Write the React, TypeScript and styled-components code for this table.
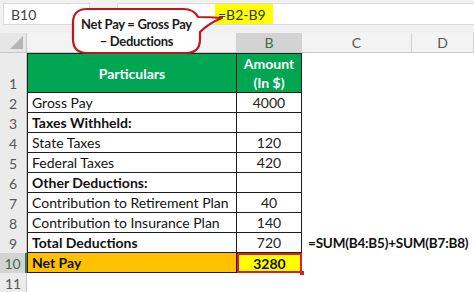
import styled, { createGlobalStyle } from 'styled-components';

const GlobalStyle = createGlobalStyle`
  * { box-sizing: border-box; }
  body {
    margin: 0;
    background: #ffffff;
    font-family: Lato, "Open Sans", Arial, sans-serif;
  }
`;

type Row = {
  label: string;
  value?: string;
  bold?: boolean;
  note?: string;
};

// 2~9행 데이터
const ROWS: Row[] = [
  { label: 'Gross Pay', value: '4000' },
  { label: 'Taxes Withheld:', bold: true },
  { label: 'State Taxes', value: '120' },
  { label: 'Federal Taxes', value: '420' },
  { label: 'Other Deductions:', bold: true },
  { label: 'Contribution to Retirement Plan', value: '40' },
  { label: 'Contribution to Insurance Plan', value: '140' },
  { label: 'Total Deductions', value: '720', bold: true, note: '=SUM(B4:B5)+SUM(B7:B8)' },
];

const COLUMNS = ['A', 'B', 'C', 'D'];

const App = () => {
  return (
    <>
      <GlobalStyle />
      <St.Page>
        <St.FormulaBar>
          <St.NameBox>B10</St.NameBox>
          <St.FormulaField>
            <St.FormulaText>=B2-B9</St.FormulaText>
          </St.FormulaField>
        </St.FormulaBar>

        <St.Sheet>
          <St.Corner>
            <St.CornerMark />
          </St.Corner>
          {COLUMNS.map((col) => (
            <St.ColHeader key={col} $selected={col === 'B'}>
              {col === 'A' ? '' : col}
            </St.ColHeader>
          ))}

          {/* 1행: 표 머리 */}
          <St.RowHeader>1</St.RowHeader>
          <St.HeadCell $first>Particulars</St.HeadCell>
          <St.HeadCell>
            <span>Amount</span>
            <span>(In $)</span>
          </St.HeadCell>
          <St.Blank />
          <St.Blank />

          {ROWS.map((row, i) => (
            <St.RowGroup key={row.label}>
              <St.RowHeader>{i + 2}</St.RowHeader>
              <St.LabelCell $bold={row.bold}>{row.label}</St.LabelCell>
              <St.ValueCell>{row.value}</St.ValueCell>
              <St.Blank>{row.note && <St.Note>{row.note}</St.Note>}</St.Blank>
              <St.Blank />
            </St.RowGroup>
          ))}

          <St.RowHeader $selected>10</St.RowHeader>
          <St.LabelCell $bold $bg="#ffc000">
            Net Pay
          </St.LabelCell>
          <St.ResultCell>3280</St.ResultCell>
          <St.Blank />
          <St.Blank />

          <St.RowHeader>11</St.RowHeader>
          <St.Blank />
          <St.Blank />
          <St.Blank />
          <St.Blank />
        </St.Sheet>

        <St.Callout>
          <svg width="156" height="50" viewBox="0 0 156 50">
            <path
              d="M16 2 H112 Q123 2 127 10 Q138 10 151 11 Q138 16 129 25 V32 Q129 46 115 46 H16 Q2 46 2 32 V16 Q2 2 16 2 Z"
              fill="#ffffff"
              stroke="#c3161c"
              strokeWidth="2.2"
              strokeLinejoin="round"
            />
          </svg>
          <St.CalloutText>
            <span>Net Pay = Gross Pay</span>
            <span>– Deductions</span>
          </St.CalloutText>
        </St.Callout>
      </St.Page>
    </>
  );
};

export default App;

const St = {
  Page: styled.div`
    position: relative;
    width: 474px;
    height: 292px;
    overflow: hidden;
    background: #ffffff;
  `,

  FormulaBar: styled.div`
    display: flex;
    align-items: flex-start;
    gap: 27px;
    height: 33px;
    padding: 3px 0 0 3px;
    background: #f1f1f1;
  `,

  NameBox: styled.div`
    display: flex;
    align-items: center;
    width: 87px;
    height: 22px;
    padding-left: 7px;
    background: #ffffff;
    border: 1px solid #dadada;
    color: #444444;
    font-size: 14px;
  `,

  FormulaField: styled.div`
    display: flex;
    align-items: stretch;
    flex: 1;
    height: 22px;
    padding-left: 97px;
    background: #ffffff;
    border: 1px solid #dadada;
    border-right: none;
  `,

  FormulaText: styled.div`
    display: flex;
    align-items: center;
    width: 58px;
    padding-left: 3px;
    background: #ffff00;
    color: #333333;
    font-size: 14px;
  `,

  Sheet: styled.div`
    display: grid;
    grid-template-columns: 27px 210px 65px 110px 62px;
    grid-template-rows: 20px 40px repeat(10, 20px);
  `,

  RowGroup: styled.div`
    display: contents;
  `,

  Corner: styled.div`
    position: relative;
    background: #e6e6e6;
    border-right: 1px solid #c8c8c8;
    border-bottom: 1px solid #c8c8c8;
  `,

  CornerMark: styled.div`
    position: absolute;
    right: 3px;
    bottom: 3px;
    width: 0;
    height: 0;
    border-left: 13px solid transparent;
    border-bottom: 13px solid #b5b5b5;
  `,

  ColHeader: styled.div<{ $selected?: boolean }>`
    display: flex;
    align-items: center;
    justify-content: center;
    background: ${({ $selected }) => ($selected ? '#d3d3d3' : '#f3f3f3')};
    border-right: 1px solid #d0d0d0;
    border-bottom: 1px solid #c8c8c8;
    color: ${({ $selected }) => ($selected ? '#3b6b4c' : '#555555')};
    font-size: 14px;
  `,

  RowHeader: styled.div<{ $selected?: boolean }>`
    display: flex;
    align-items: flex-end;
    justify-content: center;
    padding-bottom: 1px;
    background: ${({ $selected }) => ($selected ? '#d3d3d3' : '#ebebeb')};
    border-right: ${({ $selected }) => ($selected ? '2px solid #3c7a4f' : '1px solid #c8c8c8')};
    color: ${({ $selected }) => ($selected ? '#3b6b4c' : '#555555')};
    font-size: 14px;
  `,

  HeadCell: styled.div<{ $first?: boolean }>`
    display: flex;
    flex-direction: column;
    align-items: center;
    justify-content: center;
    gap: 2px;
    background: #00a651;
    border-top: 1px solid #1e1e1e;
    border-left: ${({ $first }) => ($first ? '1px solid #1e1e1e' : 'none')};
    border-right: 1px solid #1e1e1e;
    border-bottom: 1px solid #1e1e1e;
    color: #ffffff;
    font-size: 14px;
    font-weight: 700;
    line-height: 17px;
  `,

  LabelCell: styled.div<{ $bold?: boolean; $bg?: string }>`
    display: flex;
    align-items: center;
    padding-left: 4px;
    background: ${({ $bg }) => $bg ?? '#ffffff'};
    border-left: 1px solid #1e1e1e;
    border-right: 1px solid #1e1e1e;
    border-bottom: 1px solid #1e1e1e;
    color: #111111;
    font-size: 14px;
    font-weight: ${({ $bold }) => ($bold ? 700 : 400)};
    white-space: nowrap;
  `,

  ValueCell: styled.div`
    display: flex;
    align-items: center;
    justify-content: center;
    border-right: 1px solid #1e1e1e;
    border-bottom: 1px solid #1e1e1e;
    color: #222222;
    font-size: 14px;
  `,

  ResultCell: styled.div`
    position: relative;
    display: flex;
    align-items: center;
    justify-content: center;
    background: #ffff00;
    box-shadow: inset 0 0 0 2px #dd1f1f;
    color: #111111;
    font-size: 14px;
    font-weight: 700;

    &::after {
      content: '';
      position: absolute;
      right: -2px;
      bottom: -2px;
      width: 4px;
      height: 4px;
      background: #dd1f1f;
    }
  `,

  Blank: styled.div`
    display: flex;
    align-items: center;
    overflow: visible;
  `,

  Note: styled.span`
    position: relative;
    z-index: 1;
    padding-left: 6px;
    color: #111111;
    font-size: 13.5px;
    font-weight: 700;
    letter-spacing: -0.2px;
    white-space: nowrap;
  `,

  Callout: styled.div`
    position: absolute;
    left: 71px;
    top: 7px;
    width: 156px;
    height: 50px;

    & > svg {
      display: block;
    }
  `,

  CalloutText: styled.div`
    position: absolute;
    left: 2px;
    top: 2px;
    width: 127px;
    height: 44px;
    padding-top: 4px;
    display: flex;
    flex-direction: column;
    align-items: center;
    justify-content: center;
    color: #1a1a1a;
    font-size: 13px;
    font-weight: 700;
    letter-spacing: -0.3px;
    line-height: 17px;
  `,
};
